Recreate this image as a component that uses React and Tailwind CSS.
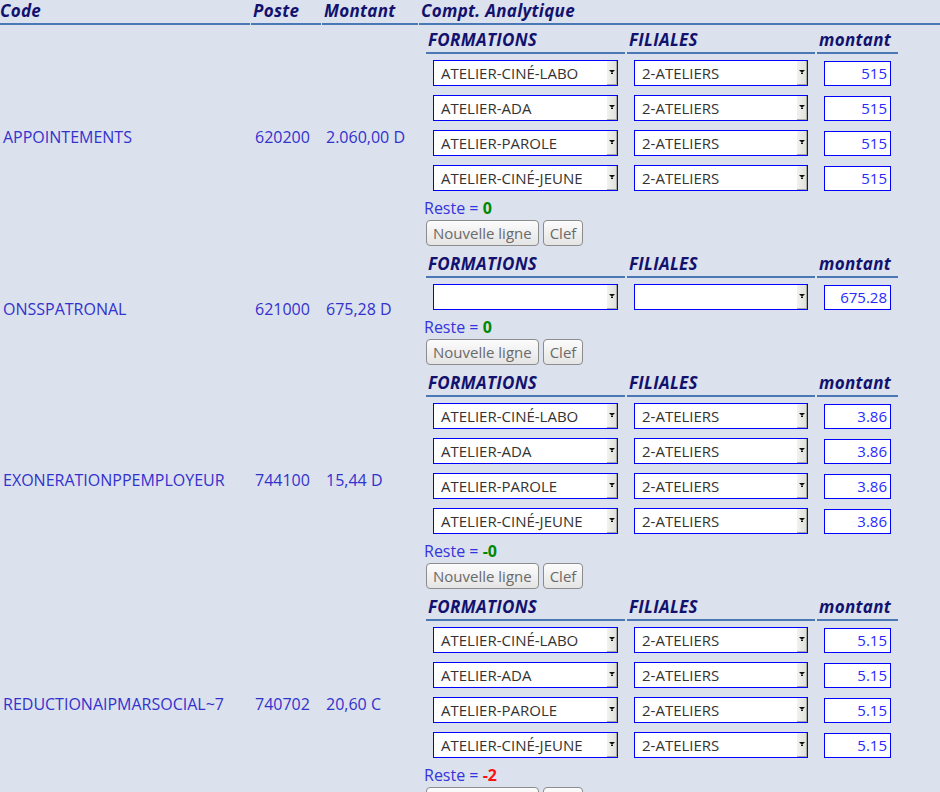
import React from "react";

const sections = [
  {
    code: "APPOINTEMENTS",
    poste: "620200",
    montant: "2.060,00 D",
    rows: [
      ["ATELIER-CINÉ-LABO", "2-ATELIERS", "515"],
      ["ATELIER-ADA", "2-ATELIERS", "515"],
      ["ATELIER-PAROLE", "2-ATELIERS", "515"],
      ["ATELIER-CINÉ-JEUNE", "2-ATELIERS", "515"],
    ],
    reste: "0",
    ok: true,
  },
  {
    code: "ONSSPATRONAL",
    poste: "621000",
    montant: "675,28 D",
    rows: [["", "", "675.28"]],
    reste: "0",
    ok: true,
  },
  {
    code: "EXONERATIONPPEMPLOYEUR",
    poste: "744100",
    montant: "15,44 D",
    rows: [
      ["ATELIER-CINÉ-LABO", "2-ATELIERS", "3.86"],
      ["ATELIER-ADA", "2-ATELIERS", "3.86"],
      ["ATELIER-PAROLE", "2-ATELIERS", "3.86"],
      ["ATELIER-CINÉ-JEUNE", "2-ATELIERS", "3.86"],
    ],
    reste: "-0",
    ok: true,
  },
  {
    code: "REDUCTIONAIPMARSOCIAL~7",
    poste: "740702",
    montant: "20,60 C",
    rows: [
      ["ATELIER-CINÉ-LABO", "2-ATELIERS", "5.15"],
      ["ATELIER-ADA", "2-ATELIERS", "5.15"],
      ["ATELIER-PAROLE", "2-ATELIERS", "5.15"],
      ["ATELIER-CINÉ-JEUNE", "2-ATELIERS", "5.15"],
    ],
    reste: "-2",
    ok: false,
  },
];

const font = { fontFamily: '"Open Sans", "Noto Sans", sans-serif' };

function HeadCell({ children, className = "" }) {
  return (
    <div
      className={`border-b-2 border-[#4a78b6] pb-[1px] text-[17px] leading-[22px] font-bold italic tracking-[0.3px] text-[#12126e] whitespace-nowrap ${className}`}
    >
      {children}
    </div>
  );
}

function FakeSelect({ value, width }) {
  return (
    <div
      className={`flex h-[26px] ${width} items-stretch border border-[#0000ff] bg-white`}
    >
      <div className="flex flex-1 items-center pl-[7px] text-[15px] text-[#333333] whitespace-nowrap overflow-hidden">
        {value}
      </div>
      <div className="flex w-[10px] items-center justify-center border-r border-b border-[#a8a8a8] bg-gradient-to-r from-[#f2f2ee] to-[#e2e2dc]">
        <svg width="6" height="5" viewBox="0 0 6 5">
          <path d="M0 0H6L3 3Z" fill="#111" />
          <rect x="2" y="3" width="2" height="1" fill="#111" />
        </svg>
      </div>
    </div>
  );
}

function Button({ children }) {
  return (
    <button className="h-[26px] rounded-[4px] border border-[#8c8c8c] bg-gradient-to-b from-[#fcfcfc] to-[#e4e4e4] px-[6px] text-[15px] leading-[20px] text-[#6a6a6a]">
      {children}
    </button>
  );
}

function Section({ s }) {
  return (
    <>
      <div className="flex items-center pl-[3px] text-[16px] text-[#3232cc]">{s.code}</div>
      <div className="flex items-center pl-[4px] text-[16px] text-[#3232cc]">{s.poste}</div>
      <div className="flex items-center pl-[4px] text-[16px] text-[#3232cc]">{s.montant}</div>
      <div className="flex flex-col pl-[5px] pb-[3px]">
        <div className="flex flex-col pl-[2px] pt-[4px]">
          <div className="grid grid-cols-[199px_188px_81px] gap-x-[2px]">
            <HeadCell className="pl-[2px]">FORMATIONS</HeadCell>
            <HeadCell className="pl-[2px]">FILIALES</HeadCell>
            <HeadCell className="pl-[2px]">montant</HeadCell>
          </div>
          <div className="flex flex-col gap-[9px] pt-[6px]">
            {s.rows.map((r, i) => (
              <div key={i} className="grid grid-cols-[199px_188px_81px] gap-x-[2px]">
                <div className="px-[7px]">
                  <FakeSelect value={r[0]} width="w-[185px]" />
                </div>
                <div className="px-[7px]">
                  <FakeSelect value={r[1]} width="w-[174px]" />
                </div>
                <div className="px-[7px] pt-[1px]">
                  <div className="flex h-[25px] w-[67px] items-center justify-end border border-[#0000ff] bg-white pr-[3px] text-[15px] text-[#2a2aff]">
                    {r[2]}
                  </div>
                </div>
              </div>
            ))}
          </div>
        </div>
        <div className="mt-[6px] text-[16px] leading-[22px] text-[#3434dd]">
          Reste ={" "}
          <span className={`font-bold ${s.ok ? "text-[#008800]" : "text-[#ff1010]"}`}>
            {s.reste}
          </span>
        </div>
        <div className="mt-[1px] flex gap-[4px] pl-[2px]">
          <Button>Nouvelle ligne</Button>
          <Button>Clef</Button>
        </div>
      </div>
    </>
  );
}

export default function App() {
  return (
    <div className="min-h-[792px] w-[940px] overflow-hidden bg-[#dce1ee]" style={font}>
      <div className="grid grid-cols-[250px_70px_96px_521px] gap-x-[1px]">
        <HeadCell className="pl-[0px]">Code</HeadCell>
        <HeadCell className="pl-[2px]">Poste</HeadCell>
        <HeadCell className="pl-[2px]">Montant</HeadCell>
        <HeadCell className="pl-[2px]">Compt. Analytique</HeadCell>
        {sections.map((s, i) => (
          <Section key={i} s={s} />
        ))}
      </div>
    </div>
  );
}
